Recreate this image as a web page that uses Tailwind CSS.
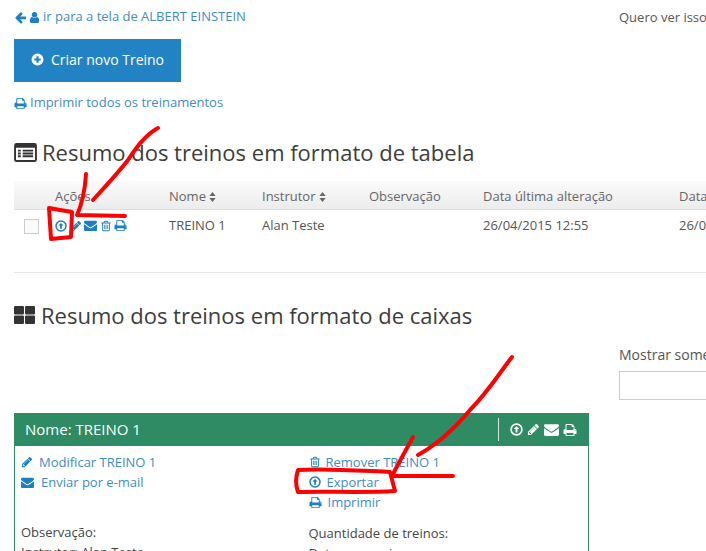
<!DOCTYPE html>
<html lang="pt">
<head>
    <meta charset="UTF-8">
    <title>Treinos</title>
    <script src="https://cdn.jsdelivr.net/npm/@tailwindcss/browser@4"></script>
</head>
<body class="relative w-[706px] h-[551px] overflow-hidden bg-white font-['Open_Sans',sans-serif] text-[13px] text-[#555]">

    <!-- Icon set -->
    <svg class="hidden">
        <symbol id="i-back" viewBox="0 0 1792 1792"><path fill="currentColor" d="M1664 896v128q0 53-32.5 90.5t-84.5 37.5h-704l293 294q38 36 38 90t-38 90l-75 76q-38 38-91 38-52 0-90-38l-651-652q-37-37-37-90 0-52 37-91l651-650q38-38 90-38 53 0 91 38l75 74q38 38 38 91t-38 91l-293 293h704q52 0 84.5 37.5t32.5 90.5z"/></symbol>
        <symbol id="i-user" viewBox="0 0 1792 1792"><path fill="currentColor" d="M1536 1399q0 109-62.5 187t-150.5 78h-854q-88 0-150.5-78t-62.5-187q0-85 8.5-160.5t31.5-152 58.5-131 94-89 134.5-34.5q131 128 313 128t313-128q76 0 134.5 34.5t94 89 58.5 131 31.5 152 8.5 160.5zm-256-887q0 159-112.5 271.5t-271.5 112.5-271.5-112.5-112.5-271.5 112.5-271.5 271.5-112.5 271.5 112.5 112.5 271.5z"/></symbol>
        <symbol id="i-print" viewBox="0 0 1792 1792"><path fill="currentColor" d="M448 1536h896v-256h-896v256zm0-640h896v-384h-160q-40 0-68-28t-28-68v-160h-640v640zm1152 64q0-26-19-45t-45-19-45 19-19 45 19 45 45 19 45-19 19-45zm128 0v416q0 13-9.5 22.5t-22.5 9.5h-224v160q0 40-28 68t-68 28h-960q-40 0-68-28t-28-68v-160h-224q-13 0-22.5-9.5t-9.5-22.5v-416q0-79 56.5-135.5t135.5-56.5h64v-544q0-40 28-68t68-28h672q40 0 88 20t76 48l152 152q28 28 48 76t20 88v256h64q79 0 135.5 56.5t56.5 135.5z"/></symbol>
        <symbol id="i-mail" viewBox="0 0 1792 1792"><path fill="currentColor" d="M1792 710v794q0 66-47 113t-113 47h-1472q-66 0-113-47t-47-113v-794q44 49 101 87 362 246 497 345 57 42 92.5 65.5t94.5 48 110 24.5h2q51 0 110-24.5t94.5-48 92.5-65.5q170-123 498-345 57-39 100-87zm0-294q0 79-49 151t-122 123q-376 261-468 325-10 7-42.5 30.5t-54 38-52 32.5-57.5 27-50 9h-2q-23 0-50-9t-57.5-27-52-32.5-54-38-42.5-30.5q-91-64-262-182.5t-205-142.5q-62-42-117-115.5t-55-136.5q0-78 41.5-130t118.5-52h1472q65 0 112.5 47t47.5 113z"/></symbol>
        <symbol id="i-pencil" viewBox="0 0 1792 1792"><path fill="currentColor" d="M491 1536l91-91-235-235-91 91v107h128v128h107zm523-928q0-22-22-22-10 0-17 7l-542 542q-7 7-7 17 0 22 22 22 10 0 17-7l542-542q7-7 7-17zm-54-192l416 416-832 832h-416v-416zm683 96q0 53-37 90l-166 166-416-416 166-165q36-38 90-38 53 0 91 38l235 234q37 39 37 91z"/></symbol>
        <symbol id="i-trash" viewBox="0 0 1792 1792"><path fill="currentColor" d="M704 736v576q0 14-9 23t-23 9h-64q-14 0-23-9t-9-23v-576q0-14 9-23t23-9h64q14 0 23 9t9 23zm256 0v576q0 14-9 23t-23 9h-64q-14 0-23-9t-9-23v-576q0-14 9-23t23-9h64q14 0 23 9t9 23zm256 0v576q0 14-9 23t-23 9h-64q-14 0-23-9t-9-23v-576q0-14 9-23t23-9h64q14 0 23 9t9 23zm128 724v-948h-896v948q0 22 7 40.5t14.5 27 10.5 8.5h832q3 0 10.5-8.5t14.5-27 7-40.5zm-672-1076h448l-48-117q-7-9-17-11h-317q-10 2-17 11zm928 32v64q0 14-9 23t-23 9h-96v948q0 83-47 143.5t-113 60.5h-832q-66 0-113-58.5t-47-141.5v-952h-96q-14 0-23-9t-9-23v-64q0-14 9-23t23-9h309l70-167q15-37 54-63t79-26h320q40 0 79 26t54 63l70 167h309q14 0 23 9t9 23z"/></symbol>
        <symbol id="i-export" viewBox="0 0 24 24"><circle cx="12" cy="12" r="10" fill="none" stroke="currentColor" stroke-width="3"/><path fill="currentColor" d="M12 5.800l5.200 5.400h-3.400v6.400h-3.600v-6.400H6.800z"/></symbol>
        <symbol id="i-plus" viewBox="0 0 24 24"><path fill="currentColor" fill-rule="evenodd" d="M12 1a11 11 0 1 1 0 22a11 11 0 0 1 0-22zM10 6v4H6v4h4v4h4v-4h4v-4h-4V6z"/></symbol>
        <symbol id="i-sort" viewBox="0 0 10 14"><path fill="currentColor" d="M5 0l4.500 5.600H.5zM5 14L.5 8.400h9z"/></symbol>
        <symbol id="i-list" viewBox="0 0 24 20"><path fill="currentColor" fill-rule="evenodd" d="M2.500 0h19A2.500 2.500 0 0 1 24 2.500v15a2.500 2.500 0 0 1-2.500 2.500h-19A2.500 2.500 0 0 1 0 17.500v-15A2.500 2.500 0 0 1 2.500 0zM2 5v12.500c0 .3.200.500.500.500h19c.3 0 .500-.200.500-.500V5zM4 7h3v2H4zm5 0h11v2H9zm-5 3h3v2H4zm5 0h11v2H9zm-5 3h3v2H4zm5 0h11v2H9z"/></symbol>
        <symbol id="i-grid" viewBox="0 0 20 17"><path fill="currentColor" d="M1 0h7.500a1 1 0 0 1 1 .900V7a1 1 0 0 1-1 1H1a1 1 0 0 1-1-1V1a1 1 0 0 1 1-1zm10.500 0H19a1 1 0 0 1 1 1v6a1 1 0 0 1-1 1h-7.500a1 1 0 0 1-1-1V1a1 1 0 0 1 1-1zM1 9h7.500a1 1 0 0 1 1 1v6a1 1 0 0 1-1 1H1a1 1 0 0 1-1-1v-6a1 1 0 0 1 1-1zm10.500 0H19a1 1 0 0 1 1 1v6a1 1 0 0 1-1 1h-7.500a1 1 0 0 1-1-1v-6a1 1 0 0 1 1-1z"/></symbol>
    </svg>

    <div class="flex w-[706px]">
        <!-- Main column -->
        <main class="w-[575px] ml-[14px] shrink-0">
            <a class="flex items-center h-[18px] mt-[8px] text-[#428bca]">
                <svg class="w-[13px] h-[13px] text-[#1b7fc4]"><use href="#i-back"/></svg>
                <svg class="w-[13px] h-[13px] ml-[1px] text-[#1b7fc4]"><use href="#i-user"/></svg>
                <span class="ml-[2px] text-[13px]">ir para a tela de ALBERT EINSTEIN</span>
            </a>

            <button class="flex items-center justify-center w-[167px] h-[43px] pb-[2px] mt-[13px] bg-[#2283c4] text-white text-[14px]">
                <svg class="w-[13px] h-[13px] mr-[7px]"><use href="#i-plus"/></svg>
                Criar novo Treino
            </button>

            <a class="flex items-center h-[18px] mt-[12px] text-[#428bca]">
                <svg class="w-[13px] h-[13px] text-[#1b7fc4]"><use href="#i-print"/></svg>
                <span class="ml-[3px] text-[13px]">Imprimir todos os treinamentos</span>
            </a>

            <h2 class="flex items-center h-[30px] mt-[25px] text-[22px] font-normal text-[#3d3d3d] whitespace-nowrap">
                <svg class="w-[23px] h-[19px] mr-[5px] text-[#333]"><use href="#i-list"/></svg>
                Resumo dos treinos em formato de tabela
            </h2>

            <!-- Table -->
            <div class="w-[830px] mt-[14px]">
                <div class="flex items-center h-[29px] pt-[3px] bg-gradient-to-b from-[#fafafa] to-[#ececec] border-b border-[#ddd] text-[13px] text-[#666] whitespace-nowrap">
                    <span class="w-[155px] shrink-0 pl-[41px]">Ações</span>
                    <span class="flex items-center w-[93px] shrink-0">Nome<svg class="w-[7px] h-[10px] ml-[3px]"><use href="#i-sort"/></svg></span>
                    <span class="flex items-center w-[107px] shrink-0">Instrutor<svg class="w-[7px] h-[10px] ml-[3px]"><use href="#i-sort"/></svg></span>
                    <span class="w-[114px] shrink-0">Observação</span>
                    <span class="w-[196px] shrink-0">Data última alteração</span>
                    <span>Data</span>
                </div>
                <div class="flex items-center h-[29px] mt-[1px] text-[13px] whitespace-nowrap">
                    <span class="w-[41px] shrink-0 pl-[10px]"><span class="block w-[15px] h-[15px] mt-[2px] border border-[#ccc] bg-[#fafafa]"></span></span>
                    <span class="flex items-center w-[114px] shrink-0 gap-[2px] text-[#1b7fc4]">
                        <svg class="w-[12px] h-[12px]"><use href="#i-export"/></svg>
                        <svg class="w-[12px] h-[12px] ml-[1px]"><use href="#i-pencil"/></svg>
                        <svg class="w-[13px] h-[13px]"><use href="#i-mail"/></svg>
                        <svg class="w-[12px] h-[12px] ml-[1px]"><use href="#i-trash"/></svg>
                        <svg class="w-[13px] h-[13px]"><use href="#i-print"/></svg>
                    </span>
                    <span class="w-[93px] shrink-0">TREINO 1</span>
                    <span class="w-[107px] shrink-0">Alan Teste</span>
                    <span class="w-[114px] shrink-0"></span>
                    <span class="w-[196px] shrink-0">26/04/2015 12:55</span>
                    <span>26/04/2015 12:55</span>
                </div>
            </div>

            <hr class="w-[692px] mt-[32px] border-[#e5e5e5]">

            <h2 class="flex items-center h-[30px] mt-[27px] text-[22px] font-normal text-[#3d3d3d] whitespace-nowrap">
                <svg class="w-[21px] h-[18px] mr-[6px] text-[#333]"><use href="#i-grid"/></svg>
                Resumo dos treinos em formato de caixas
            </h2>

            <!-- Card -->
            <section class="mt-[83px] border-x border-[#2e8b63] h-[200px]">
                <header class="flex items-center justify-between h-[33px] -mx-px bg-[#2e8b63] text-white">
                    <span class="ml-[11px] text-[15px]">Nome: TREINO 1</span>
                    <span class="flex items-center h-[23px] border-l border-white/80 pl-[11px] pr-[12px] gap-[4px]">
                        <svg class="w-[13px] h-[13px]"><use href="#i-export"/></svg>
                        <svg class="w-[13px] h-[13px]"><use href="#i-pencil"/></svg>
                        <svg class="w-[15px] h-[15px]"><use href="#i-mail"/></svg>
                        <svg class="w-[14px] h-[14px]"><use href="#i-print"/></svg>
                    </span>
                </header>
                <div class="grid grid-cols-2 pl-[6px] pt-[6px] text-[13px] leading-[20px] whitespace-nowrap">
                    <div>
                        <a class="flex items-center text-[#428bca]"><svg class="w-[12px] h-[12px] mr-[6px] text-[#1b7fc4]"><use href="#i-pencil"/></svg>Modificar TREINO 1</a>
                        <a class="flex items-center text-[#428bca]"><svg class="w-[13px] h-[13px] mr-[7px] text-[#1b7fc4]"><use href="#i-mail"/></svg>Enviar por e-mail</a>
                        <p class="mt-[30px] text-[#444] text-[13px]">Observação:</p>
                        <p class="text-[#444] text-[13px]">Instrutor: Alan Teste</p>
                    </div>
                    <div class="pl-[4px]">
                        <a class="flex items-center text-[#428bca]"><svg class="w-[12px] h-[12px] mr-[5px] text-[#1b7fc4]"><use href="#i-trash"/></svg>Remover TREINO 1</a>
                        <a class="flex items-center text-[#428bca]"><svg class="w-[12px] h-[12px] mr-[6px] text-[#1b7fc4]"><use href="#i-export"/></svg>Exportar</a>
                        <a class="flex items-center text-[#428bca]"><svg class="w-[13px] h-[13px] mr-[6px] text-[#1b7fc4]"><use href="#i-print"/></svg>Imprimir</a>
                        <p class="mt-[11px] text-[#444] text-[13px]">Quantidade de treinos:</p>
                        <p class="text-[#444] text-[13px]">Data que expira:</p>
                    </div>
                </div>
            </section>
        </main>

        <!-- Right column, cut off by the window -->
        <aside class="ml-[30px] shrink-0 w-[200px] text-[13px] text-[#555] whitespace-nowrap">
            <p class="mt-[8px] leading-[18px]">Quero ver isso</p>
            <p class="mt-[320px] leading-[18px] text-[14px]">Mostrar somente</p>
            <div class="w-[200px] h-[29px] mt-[7px] border border-[#ccc]"></div>
        </aside>
    </div>

    <!-- Red annotations drawn over the page -->
    <svg class="absolute inset-0 w-[706px] h-[551px] pointer-events-none" viewBox="0 0 706 551" fill="none" stroke="#f00" stroke-width="4" stroke-linecap="round" stroke-linejoin="round">
        <path d="M158 128C145 135 136 148 128 160C118 173 104 188 93 200"/>
        <path d="M86 174C85 190 82 204 77 215L125 216"/>
        <path d="M49 208L60 210L72 212L71 237L51 239Z"/>
        <path d="M512 357C498 375 488 392 470 410C455 428 436 445 418 455"/>
        <path d="M413 437C406 450 398 464 392 476L453 476"/>
        <path d="M298 470C325 468 365 471 390 472L395 491C365 493 325 491 298 492C295 484 296 476 298 470Z"/>
    </svg>
</body>
</html>
